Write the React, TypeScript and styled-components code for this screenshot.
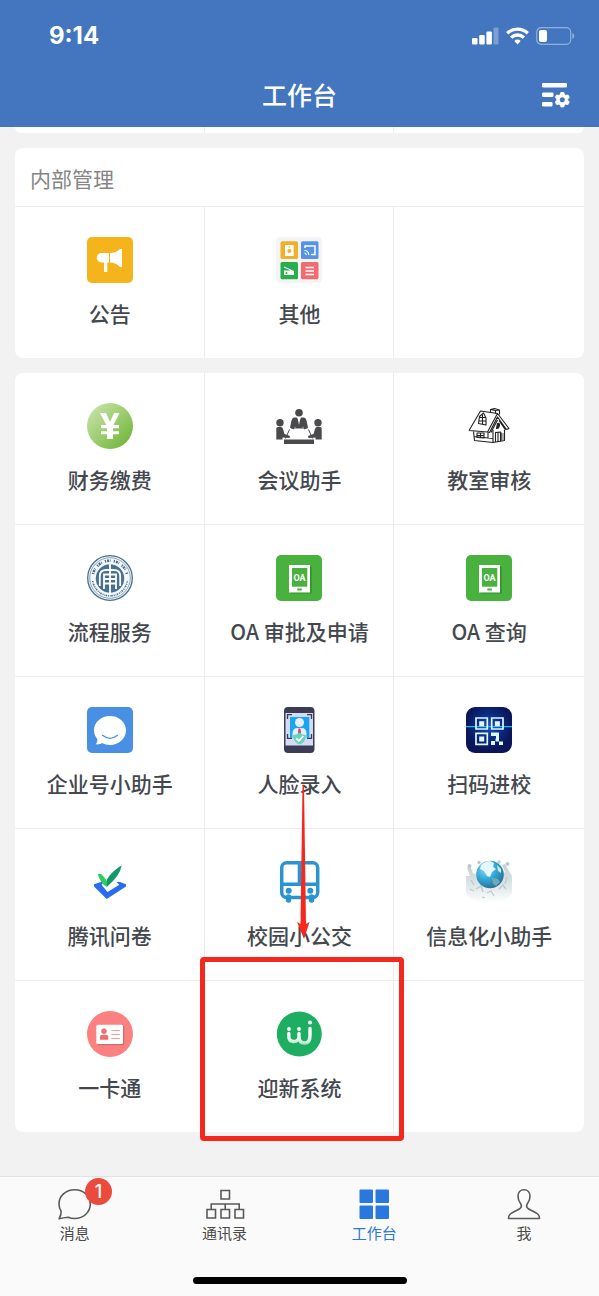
import React from "react";
import styled, { createGlobalStyle } from "styled-components";

const Global = createGlobalStyle`
  * { box-sizing: border-box; }
  body {
    margin: 0;
    background: #f2f2f2;
    font-family: Inter, "Noto Sans CJK SC", sans-serif;
    color: #44484e;
  }
`;

const Page = styled.div`
  min-height: 100vh;
  display: flex;
  flex-direction: column;
`;

const Header = styled.header`
  background: #4376be;
  color: #fff;
`;

const StatusBar = styled.div`
  display: flex;
  justify-content: space-between;
  align-items: center;
  height: 72px;
  padding: 0 24px 0 49px;
`;

const Time = styled.time`
  font-size: 24px;
  line-height: 28px;
  font-weight: 700;
`;

const StatusIcons = styled.div`
  display: flex;
  align-items: center;
  gap: 7px;
`;

const TitleBar = styled.div`
  display: grid;
  grid-template-columns: 1fr auto 1fr;
  align-items: center;
  height: 55px;
  padding: 0 29px 8px;
`;

const Title = styled.h1`
  grid-column: 2;
  margin: 0;
  font-size: 25px;
  line-height: 36px;
  font-weight: 500;
`;

const IconButton = styled.button`
  justify-self: end;
  display: flex;
  padding: 0;
  border: 0;
  background: none;
`;

const Main = styled.main`
  flex: 1;
  display: flex;
  flex-direction: column;
  gap: 15px;
  padding: 0 15px 44px;
`;

const Card = styled.section`
  background: #fff;
  border-radius: 8px;
`;

const CardTail = styled.div`
  display: grid;
  grid-template-columns: repeat(3, 1fr);
  height: 6px;
  background: #fff;
  border-radius: 0 0 8px 8px;
`;

const TailCell = styled.div`
  &:not(:last-child) { box-shadow: inset -1px 0 #ececec; }
`;

const CardTitle = styled.h2`
  margin: 0;
  padding: 17px 15px 11px;
  border-bottom: 1px solid #ececec;
  color: #858585;
  font-size: 21px;
  line-height: 30px;
  font-weight: 400;
`;

const Grid = styled.div`
  display: grid;
  grid-template-columns: repeat(3, 1fr);
`;

const Cell = styled.div<{ $lastRow: boolean; $lastColumn: boolean }>`
  position: relative;
  display: flex;
  border-bottom: ${(p) => (p.$lastRow ? "0" : "1px solid #ececec")};
  box-shadow: ${(p) => (p.$lastColumn ? "none" : "inset -1px 0 #ececec")};
`;

const AppButton = styled.button`
  flex: 1;
  display: flex;
  flex-direction: column;
  align-items: center;
  gap: 15px;
  padding: 30px 0;
  border: 0;
  background: none;
  color: inherit;
  font-family: "Noto Sans CJK SC", sans-serif;
  font-size: 21px;
  line-height: 30px;
  font-weight: 500;
  white-space: nowrap;
`;

const AppIcon = styled.svg.attrs({ viewBox: "0 0 46 46", "aria-hidden": true })`
  display: block;
  width: 46px;
  height: 46px;
`;

const Highlight = styled.div`
  position: absolute;
  z-index: 1;
  inset: -24px -10px -9px -5px;
  border: 5px solid #f4281c;
  border-radius: 4px;
  pointer-events: none;
`;

const Arrow = styled.svg`
  position: absolute;
  z-index: 1;
  left: 50%;
  bottom: 193px;
  width: 14px;
  height: 154px;
  margin-left: -3px;
  pointer-events: none;
`;

const TabBar = styled.footer`
  padding: 11px 0 12px;
  border-top: 1px solid #e2e2e2;
  background: #fafafa;
`;

const Tabs = styled.nav`
  display: grid;
  grid-template-columns: repeat(4, 1fr);
`;

const Tab = styled.a<{ $active?: boolean }>`
  display: flex;
  flex-direction: column;
  align-items: center;
  gap: 4px;
  color: ${(p) => (p.$active ? "#2878df" : "#4a4a4a")};
  font-size: 15px;
  line-height: 20px;
  text-decoration: none;
`;

const TabIcon = styled.span`
  position: relative;
  display: block;
  width: 40px;
  height: 32px;
  svg { display: block; }
`;

const Badge = styled.span`
  position: absolute;
  left: 30px;
  top: -10px;
  width: 27px;
  height: 27px;
  border-radius: 50%;
  background: #ea4b3d;
  color: #fff;
  font-size: 18px;
  line-height: 27px;
  font-weight: 500;
  text-align: center;
`;

const HomeIndicator = styled.div`
  width: 214px;
  height: 7px;
  margin: 33px auto 0;
  border-radius: 4px;
  background: #000;
`;

const Notice = () => (
  <AppIcon>
    <rect width="46" height="46" rx="5" fill="#f5b41c" />
    <path d="M22 16v9.500h-1.700V35h-3.300v-9.500h-2.500a4.750 4.750 0 0 1 0-9.500z" fill="#fff" />
    <path d="M23 16q6 0 10-4l2 0v18l-2 0q-4-4.500-10-4.500z" fill="#fff" />
  </AppIcon>
);

const Others = () => (
  <AppIcon>
    <rect width="46" height="46" rx="4" fill="#f4f4f4" />
    <rect x="4.500" y="4.300" width="17.500" height="17.700" rx="1.500" fill="#f0b02c" />
    <rect x="25" y="4.300" width="17.500" height="17.700" rx="1.500" fill="#5592ea" />
    <rect x="4.500" y="25" width="17.500" height="17.300" rx="1.500" fill="#28ae4c" />
    <rect x="25" y="25" width="17.500" height="17.300" rx="1.500" fill="#f26b70" />
    <rect x="9" y="8" width="8.600" height="11" fill="#fff" />
    <circle cx="13.300" cy="14" r="2" fill="#f0b02c" />
    <circle cx="13.300" cy="10" r=".8" fill="#f0b02c" />
    <path d="M29 11V9h10v8.500h-4" fill="none" stroke="#fff" strokeWidth="1.500" />
    <path d="M28.500 13.500q4 0 4.300 4.500M28.500 16q1.700 0 1.900 2" fill="none" stroke="#fff" strokeWidth="1.200" />
    <path d="M8 29.500l10 4.500v4H8v-4.500h6.500l-6.500-3z" fill="#fff" />
    <circle cx="10.500" cy="36" r="1" fill="#28ae4c" />
    <path d="M29.500 30.500h8.500M29.500 34h8.500M29.500 37.500h8.500" stroke="#fff" strokeWidth="1.300" />
  </AppIcon>
);

const Payment = () => (
  <AppIcon>
    <defs>
      <linearGradient id="pay" x1="0" y1="0" x2="1" y2="1">
        <stop offset="0" stopColor="#d3e6b4" />
        <stop offset=".5" stopColor="#9ccd70" />
        <stop offset="1" stopColor="#67b02c" />
      </linearGradient>
    </defs>
    <circle cx="23" cy="23" r="23" fill="url(#pay)" />
    <path d="M13 10h6l4 9 4-9h5.500l-6 12h5.500v3.300h-6v3h6v3h-6V36h-6v-4.700h-6v-3h6v-3h-6V22h5.300z" fill="#fff" />
  </AppIcon>
);

const Meeting = () => (
  <AppIcon fill="#4a4a4c">
    <circle cx="23" cy="9.700" r="3.800" />
    <circle cx="4" cy="19.700" r="3.700" />
    <circle cx="42" cy="19.700" r="3.700" />
    <path d="M18 14.500h3l2 4 2-4h3q2 .5 2.500 3l1.500 7-3.500 2-1.500-3-1 1.500h-6l-1-1.500-1.500 3-3.500-2 1.500-7q.5-2.500 2.500-3z" />
    <path d="M15 25h16.500M13.500 26.500l-4 9M32.500 26.500l4 9" fill="none" stroke="#4a4a4c" strokeWidth="1" />
    <path d="M.3 25.500q0-1.500 1.500-1.500H5q1.500 0 2 2l1.500 5 5.500 2-.5 2-7-.5V36.500H.3zM45.700 25.500q0-1.500-1.500-1.500H41q-1.500 0-2 2l-1.500 5-5.500 2 .5 2 7-.5V36.500h6.200z" />
    <path d="M8 36.500h30V41H8z" />
    <path d="M21.700 15l1.300 7 1.300-7z" fill="#fff" />
  </AppIcon>
);

const House = () => (
  <AppIcon fill="none" stroke="#222" strokeWidth="1.100" strokeLinejoin="round">
    <path d="M3 27.500L14.500 8 31.500 10.500 21.500 29 3 27.500M31.500 10.500L43 25.500l-2.500 1L31.500 14l-8 15.500-2-.500M31.500 17l-6.500 12.500M33 17.500l6.500 9.500" />
    <path d="M7.500 28.500l1 9L27 39.500l11.500-2V27M27 39.500V27M8 33.500l19 2M22 29.500V36" />
    <path d="M24.500 9V6.500l4-1 5 1.500v4.500M24.500 6.500l5 1 4-.500M29.500 7.500v3" />
    <path d="M12.500 20.500l1-7 4-3.500 2.500 5v7zM13.500 14.500h6M16.500 12v9.500M13 18h7" />
    <path d="M29.500 39v-9.500l5-.500v9.500M32 29v10M11 30h7v5l-7-.500zM14.500 30v5M11 32.500h7" />
    <path d="M31.500 20.500q2-1 2 1.500l-1 3-2 .500z" fill="#222" />
    <path d="M35.500 29.500v8M37 30v7" strokeWidth=".7" />
  </AppIcon>
);

const Seal = () => (
  <AppIcon fill="none" stroke="#466f90">
    <circle cx="23" cy="23" r="22.300" strokeWidth="1.300" fill="#f3f7f9" />
    <circle cx="23" cy="23" r="20.300" strokeWidth=".6" />
    <path d="M6 19A17.500 17.500 0 0 1 40 19" strokeWidth="2.600" strokeDasharray="1.200 1 2 .8 .7 3.300" />
    <path d="M5.700 26A17.500 17.500 0 0 0 40.300 26" strokeWidth="1.600" strokeDasharray="1 .9 .6 .7 1.500 1" />
    <circle cx="23" cy="23.500" r="14" fill="#466f90" strokeWidth=".5" />
    <g stroke="#fff" strokeWidth="1.800">
      <path d="M23 9v30M17 34V19.500h12V34M17 24h12M17 28.500h12" />
      <path d="M12.800 31V21q0-6 6.500-6h7.400q6.500 0 6.500 6v10" />
    </g>
  </AppIcon>
);

const OaTablet = () => (
  <AppIcon>
    <rect width="46" height="46" rx="5" fill="#49b13d" />
    <path d="M34 11.500h1.500v27H14.500v-1z" fill="#348d2c" />
    <rect x="13" y="10" width="21" height="27.500" fill="#fff" />
    <rect x="16" y="13" width="15.300" height="18.700" fill="#49b13d" />
    <rect x="21.300" y="33.500" width="4.500" height="2" fill="#49b13d" />
    <text x="23.600" y="25.500" textAnchor="middle" fontFamily="Liberation Sans Narrow, Roboto" fontSize="9" fontWeight="700" fill="#fff">OA</text>
  </AppIcon>
);

const Assistant = () => (
  <AppIcon>
    <rect width="46" height="46" rx="5" fill="#4990e4" />
    <path d="M23 9c9 0 16 6.300 16 14.300S32 38 23 38c-3 0-5.700-.7-8-2-2 1.300-4 1.600-6.200 1.300 1.300-1.600 1.700-3.300 1.500-5.300C8.200 29.500 7 26.600 7 23.300 7 15.300 14 9 23 9z" fill="#fff" />
    <path d="M15.500 28.300q7.500 6 15 0" fill="none" stroke="#4990e4" strokeWidth="1.300" strokeLinecap="round" />
  </AppIcon>
);

const FaceEntry = () => (
  <AppIcon>
    <rect x="8" y="0" width="30.500" height="46" rx="4" fill="#3c3c55" />
    <rect x="9.500" y="6" width="27.500" height="32.500" fill="#d3dcf5" />
    <rect x="14" y="10" width="19.300" height="20.700" fill="#19a5f2" />
    <circle cx="23.500" cy="15.500" r="4.500" fill="#e9edfb" />
    <path d="M16.500 30.500v-4q0-5.500 5-5.500h4q5 0 5 5.500v4z" fill="#e9edfb" />
    <path d="M22.500 21.500h2l.7 6h-3.400z" fill="#dd3f6d" />
    <path d="M11.500 12V7.700H16M31 7.700h4.500V12M11.500 27v4.300H16M31 31.300h4.500V27" fill="none" stroke="#3c3c55" strokeWidth="1.300" />
    <path d="M23.500 25.500q3 2.500 6.500 2.500 0 7-6.500 9.500-6.500-2.500-6.500-9.500 3.500 0 6.500-2.500z" fill="#67d3bd" />
    <path d="M20.300 31.500l2.500 2.500 4.500-5" fill="none" stroke="#fff" strokeWidth="1.800" />
  </AppIcon>
);

const QrEntry = () => (
  <AppIcon>
    <defs>
      <radialGradient id="qr" cy=".42">
        <stop offset="0" stopColor="#1653b8" />
        <stop offset=".55" stopColor="#0b2b83" />
        <stop offset="1" stopColor="#0a1659" />
      </radialGradient>
    </defs>
    <rect width="46" height="46" rx="9" fill="url(#qr)" />
    <path d="M0 19.700h46" stroke="#27b6f5" strokeWidth="1.300" />
    <g fill="none" stroke="#dff7fb" strokeWidth="1.700">
      <path d="M10 11h11.300v11H10zM25.700 11H37v11H25.700zM10 26.300h11.300v11H10z" />
    </g>
    <path d="M13.200 14.200h5v5h-5zM28.900 14.200h5v5h-5zM13.200 29.400h5v5h-5zM25 25.500h8v6h-3v-2.500h-5zM25 34h4v4h-4zM33 34.500h4V38h-4zM29.500 31.500h3.500v3h-3.500z" fill="#dff7fb" />
  </AppIcon>
);

const Survey = () => (
  <AppIcon>
    <path d="M7 25.300l7-2.300h3l-2.500 2.700L20.500 33l11.800-7.300-2.800-2.700h3.500l6 2.300v2.200L19.700 40 7 27.500z" fill="#2a6cf0" />
    <path d="M10.700 15.300q3-1.500 5 1.200l5 6.500-1 5q-6-3.500-9-12.700z" fill="#2bd05c" />
    <path d="M34.700 6.300Q33 17 19.700 28l.3-7.500Q24 13 34.700 6.300z" fill="#129a6a" />
  </AppIcon>
);

const Bus = () => (
  <AppIcon fill="none" stroke="#2994d0" strokeWidth="3.500">
    <rect x="5.700" y="3.700" width="36" height="34.800" rx="5" />
    <path d="M5.700 25.200h36" />
    <path d="M23.700 4v21" strokeWidth="4" />
    <path d="M12.500 38v3M35.500 38v3" strokeWidth="5.500" strokeLinecap="round" />
    <circle cx="12.700" cy="31.700" r="3" fill="#2994d0" stroke="none" />
    <circle cx="34.300" cy="31.700" r="3" fill="#2994d0" stroke="none" />
  </AppIcon>
);

const Globe = () => (
  <AppIcon>
    <defs>
      <radialGradient id="globe" cx=".35" cy=".3" r=".75">
        <stop offset="0" stopColor="#8bdcf4" />
        <stop offset=".5" stopColor="#34a8d8" />
        <stop offset="1" stopColor="#276f96" />
      </radialGradient>
      <linearGradient id="crowd" x1="0" y1="0" x2="0" y2="1">
        <stop offset="0" stopColor="#c3cfd2" />
        <stop offset=".5" stopColor="#dbe4e6" />
        <stop offset="1" stopColor="#fff" />
      </linearGradient>
    </defs>
    <path d="M0 17h4l-3-8 3-3 3 8 4 2h25l3-3-3-7 3-1 5 9 2 3v17l-4 5-6 3-5 2H14l-6-3-5-2-3-6z" fill="url(#crowd)" />
    <g fill="#bccacd">
      <circle cx="3.500" cy="7" r="2" /><circle cx="13" cy="3.500" r="1.700" />
      <circle cx="33" cy="3" r="1.700" /><circle cx="41.500" cy="5" r="2" />
    </g>
    <path d="M5 21l3 5M10 30l5-3 2 6M21 34l4-2 3 5M33 30l4-4 3 4M41 18l-2 7M4 30l4 2M16 38l3 1" fill="none" stroke="#bccacd" strokeWidth="1.300" />
    <circle cx="24" cy="15.500" r="13.800" fill="url(#globe)" />
    <path d="M15 6q4-4 9-4l4 2-1 4 3 2-4 3-2 5-3-1-3-5-4-2z" fill="#e6f8fb" />
    <path d="M26 19l6 1 2 3-4 4-3-2z" fill="#73a8b5" />
    <path d="M31 6l4 4v4l-3-2z" fill="#cdeef5" />
  </AppIcon>
);

const CampusCard = () => (
  <AppIcon>
    <circle cx="23" cy="23" r="23" fill="#fb8080" />
    <rect x="10.300" y="14.700" width="27" height="19.500" rx="1.500" fill="#c97070" />
    <rect x="9.300" y="13.700" width="26.700" height="19.300" rx="1.500" fill="#fff" />
    <circle cx="17" cy="20.300" r="2.700" fill="#e9706f" />
    <path d="M13 28.700V26q0-2.300 2.300-2.300h3.700q2.300 0 2.300 2.300v2.700z" fill="#e9706f" />
    <path d="M24.300 19.500h8.500M24.300 23.500h8.500M24.300 27.500h8.500" stroke="#f59a9a" strokeWidth="1.200" />
  </AppIcon>
);

const Welcome = () => (
  <AppIcon>
    <defs>
      <linearGradient id="smile" gradientUnits="userSpaceOnUse" x1="0" y1="21" x2="0" y2="35">
        <stop offset="0" stopColor="#fff" />
        <stop offset=".45" stopColor="#f2fbf5" />
        <stop offset="1" stopColor="#9adbb4" />
      </linearGradient>
    </defs>
    <circle cx="23.300" cy="23" r="22.500" fill="#1eae62" />
    <path d="M12.800 22.500v3q0 5 5 5t5.200-5v-3M23 25.500q0 6.500 5.500 6.500t5.500-7v-7.500" fill="none" stroke="url(#smile)" strokeWidth="3.400" strokeLinecap="round" />
    <g fill="#fff">
      <circle cx="13" cy="18" r="1.900" /><circle cx="23" cy="18" r="1.900" /><circle cx="34" cy="11.500" r="2" />
    </g>
  </AppIcon>
);

type Item = { name: string; Icon: React.FC; marked?: boolean };

const internalApps: (Item | null)[] = [
  { name: "公告", Icon: Notice },
  { name: "其他", Icon: Others },
  null,
];

const campusApps: (Item | null)[] = [
  { name: "财务缴费", Icon: Payment },
  { name: "会议助手", Icon: Meeting },
  { name: "教室审核", Icon: House },
  { name: "流程服务", Icon: Seal },
  { name: "OA 审批及申请", Icon: OaTablet },
  { name: "OA 查询", Icon: OaTablet },
  { name: "企业号小助手", Icon: Assistant },
  { name: "人脸录入", Icon: FaceEntry },
  { name: "扫码进校", Icon: QrEntry },
  { name: "腾讯问卷", Icon: Survey },
  { name: "校园小公交", Icon: Bus },
  { name: "信息化小助手", Icon: Globe },
  { name: "一卡通", Icon: CampusCard },
  { name: "迎新系统", Icon: Welcome, marked: true },
  null,
];

const AppGrid = ({ items }: { items: (Item | null)[] }) => (
  <Grid>
    {items.map((item, i) => (
      <Cell key={i} $lastRow={i >= items.length - 3} $lastColumn={i % 3 === 2}>
        {item && (
          <AppButton type="button">
            <item.Icon />
            {item.name}
          </AppButton>
        )}
        {item?.marked && (
          <>
            <Arrow viewBox="0 0 14 154" aria-hidden="true">
              <path d="M6.500 0h1.500L10 139l3.500-2L8 154 1 137l3.500 2z" fill="#f4281c" />
            </Arrow>
            <Highlight />
          </>
        )}
      </Cell>
    ))}
  </Grid>
);

const Signal = () => (
  <svg width="27" height="18" viewBox="0 0 27 18" fill="#fff" aria-hidden="true">
    <rect x="0" y="11" width="5.500" height="6.500" rx="1.200" />
    <rect x="7.200" y="8" width="5.500" height="9.500" rx="1.200" />
    <rect x="14.400" y="4.500" width="5.500" height="13" rx="1.200" />
    <rect x="21.500" y="0.500" width="5" height="17" rx="1.200" opacity=".3" />
  </svg>
);

const Wifi = () => (
  <svg width="23" height="18" viewBox="0 0 23 18" fill="none" stroke="#fff" strokeWidth="3.300" aria-hidden="true">
    <path d="M1.200 6.300a14.800 14.800 0 0 1 20.600 0" />
    <path d="M5.100 10.600a9.200 9.200 0 0 1 12.800 0" />
    <path d="M11.500 17.500l-3.200-3.400a4.700 4.700 0 0 1 6.400 0z" fill="#fff" stroke="none" />
  </svg>
);

const Battery = () => (
  <svg width="39" height="20" viewBox="0 0 39 20" aria-hidden="true">
    <rect x=".7" y="1.700" width="34" height="16.600" rx="4.500" fill="none" stroke="#8fb0dd" strokeWidth="1.200" />
    <rect x="3" y="4" width="8" height="12" rx="2" fill="#fff" />
    <path d="M36.300 7q2 .8 2 3t-2 3z" fill="#8fb0dd" />
  </svg>
);

const ManageIcon = () => (
  <svg width="28" height="25" viewBox="0 0 28 25" fill="#fff" aria-hidden="true">
    <rect x="0" y="0" width="25" height="4.500" rx="1.300" />
    <rect x="0" y="9.500" width="11.500" height="4.500" rx="1.300" />
    <rect x="0" y="19" width="10.500" height="4.500" rx="1.300" />
    <g transform="translate(20.300 16.700)">
      {[0, 60, 120].map((a) => (
        <rect key={a} x="-2.200" y="-7.700" width="4.400" height="15.400" rx="1.400" transform={`rotate(${a})`} />
      ))}
      <circle r="6" />
      <circle r="2.500" fill="#4376be" />
    </g>
  </svg>
);

export default function App() {
  return (
    <Page>
      <Global />
      <Header>
        <StatusBar>
          <Time>9:14</Time>
          <StatusIcons>
            <Signal />
            <Wifi />
            <Battery />
          </StatusIcons>
        </StatusBar>
        <TitleBar>
          <Title>工作台</Title>
          <IconButton type="button" aria-label="管理">
            <ManageIcon />
          </IconButton>
        </TitleBar>
      </Header>
      <Main>
        <CardTail>
          <TailCell />
          <TailCell />
          <TailCell />
        </CardTail>
        <Card>
          <CardTitle>内部管理</CardTitle>
          <AppGrid items={internalApps} />
        </Card>
        <Card>
          <AppGrid items={campusApps} />
        </Card>
      </Main>
      <TabBar>
        <Tabs>
          <Tab href="#messages">
            <TabIcon>
              <svg width="40" height="32" viewBox="0 0 40 32" fill="none" stroke="#5a5a5a" strokeWidth="1.600" strokeLinejoin="round">
                <path d="M19.700 1.800C28.700 1.800 35.300 8 35.300 16S28.700 30.500 19.700 30.500c-2.700 0-4.700-.5-6.500-1.300-3.200.3-5.700.6-9 1.500 1.500-2.700 2.200-4.700 1.900-7.700C4.500 20.800 4 18.500 4 16 4 8 10.700 1.800 19.700 1.800z" />
              </svg>
              <Badge>1</Badge>
            </TabIcon>
            消息
          </Tab>
          <Tab href="#contacts">
            <TabIcon>
              <svg width="40" height="32" viewBox="0 0 40 32" fill="none" stroke="#5a5a5a" strokeWidth="1.600">
                <path d="M16 2.500h8.500v8.500H16zM2 21.500h8.500V30H2zM16 21.500h8.500V30H16zM30 21.500h8.500V30H30zM6.200 21.500v-5.500h28v5.500M20.200 16v5.500" />
              </svg>
            </TabIcon>
            通讯录
          </Tab>
          <Tab href="#workbench" $active aria-current="page">
            <TabIcon>
              <svg width="40" height="32" viewBox="0 0 40 32" fill="#2878df">
                <rect x="5.500" y="1.500" width="13.500" height="13.500" rx="1" />
                <rect x="21.500" y="1.500" width="13.500" height="13.500" rx="1" />
                <rect x="5.500" y="17.500" width="13.500" height="13.500" rx="1" />
                <rect x="21.500" y="17.500" width="13.500" height="13.500" rx="1" />
              </svg>
            </TabIcon>
            工作台
          </Tab>
          <Tab href="#me">
            <TabIcon>
              <svg width="40" height="32" viewBox="0 0 40 32" fill="none" stroke="#5a5a5a" strokeWidth="1.600" strokeLinejoin="round">
                <path d="M20 1.800c-3.700 0-6 2.700-6 6.500 0 3 1 5.200 2.500 7.200 1 1.500 1 3.800-.5 5C13 22.500 8.500 24 5.800 26.500c-1 1-1.300 2.300-1.300 4h31c0-1.700-.3-3-1.300-4-2.700-2.500-7.200-4-10.200-6-1.500-1.200-1.500-3.500-.5-5C25 13.500 26 11.300 26 8.300c0-3.800-2.300-6.500-6-6.500z" />
              </svg>
            </TabIcon>
            我
          </Tab>
        </Tabs>
        <HomeIndicator />
      </TabBar>
    </Page>
  );
}
